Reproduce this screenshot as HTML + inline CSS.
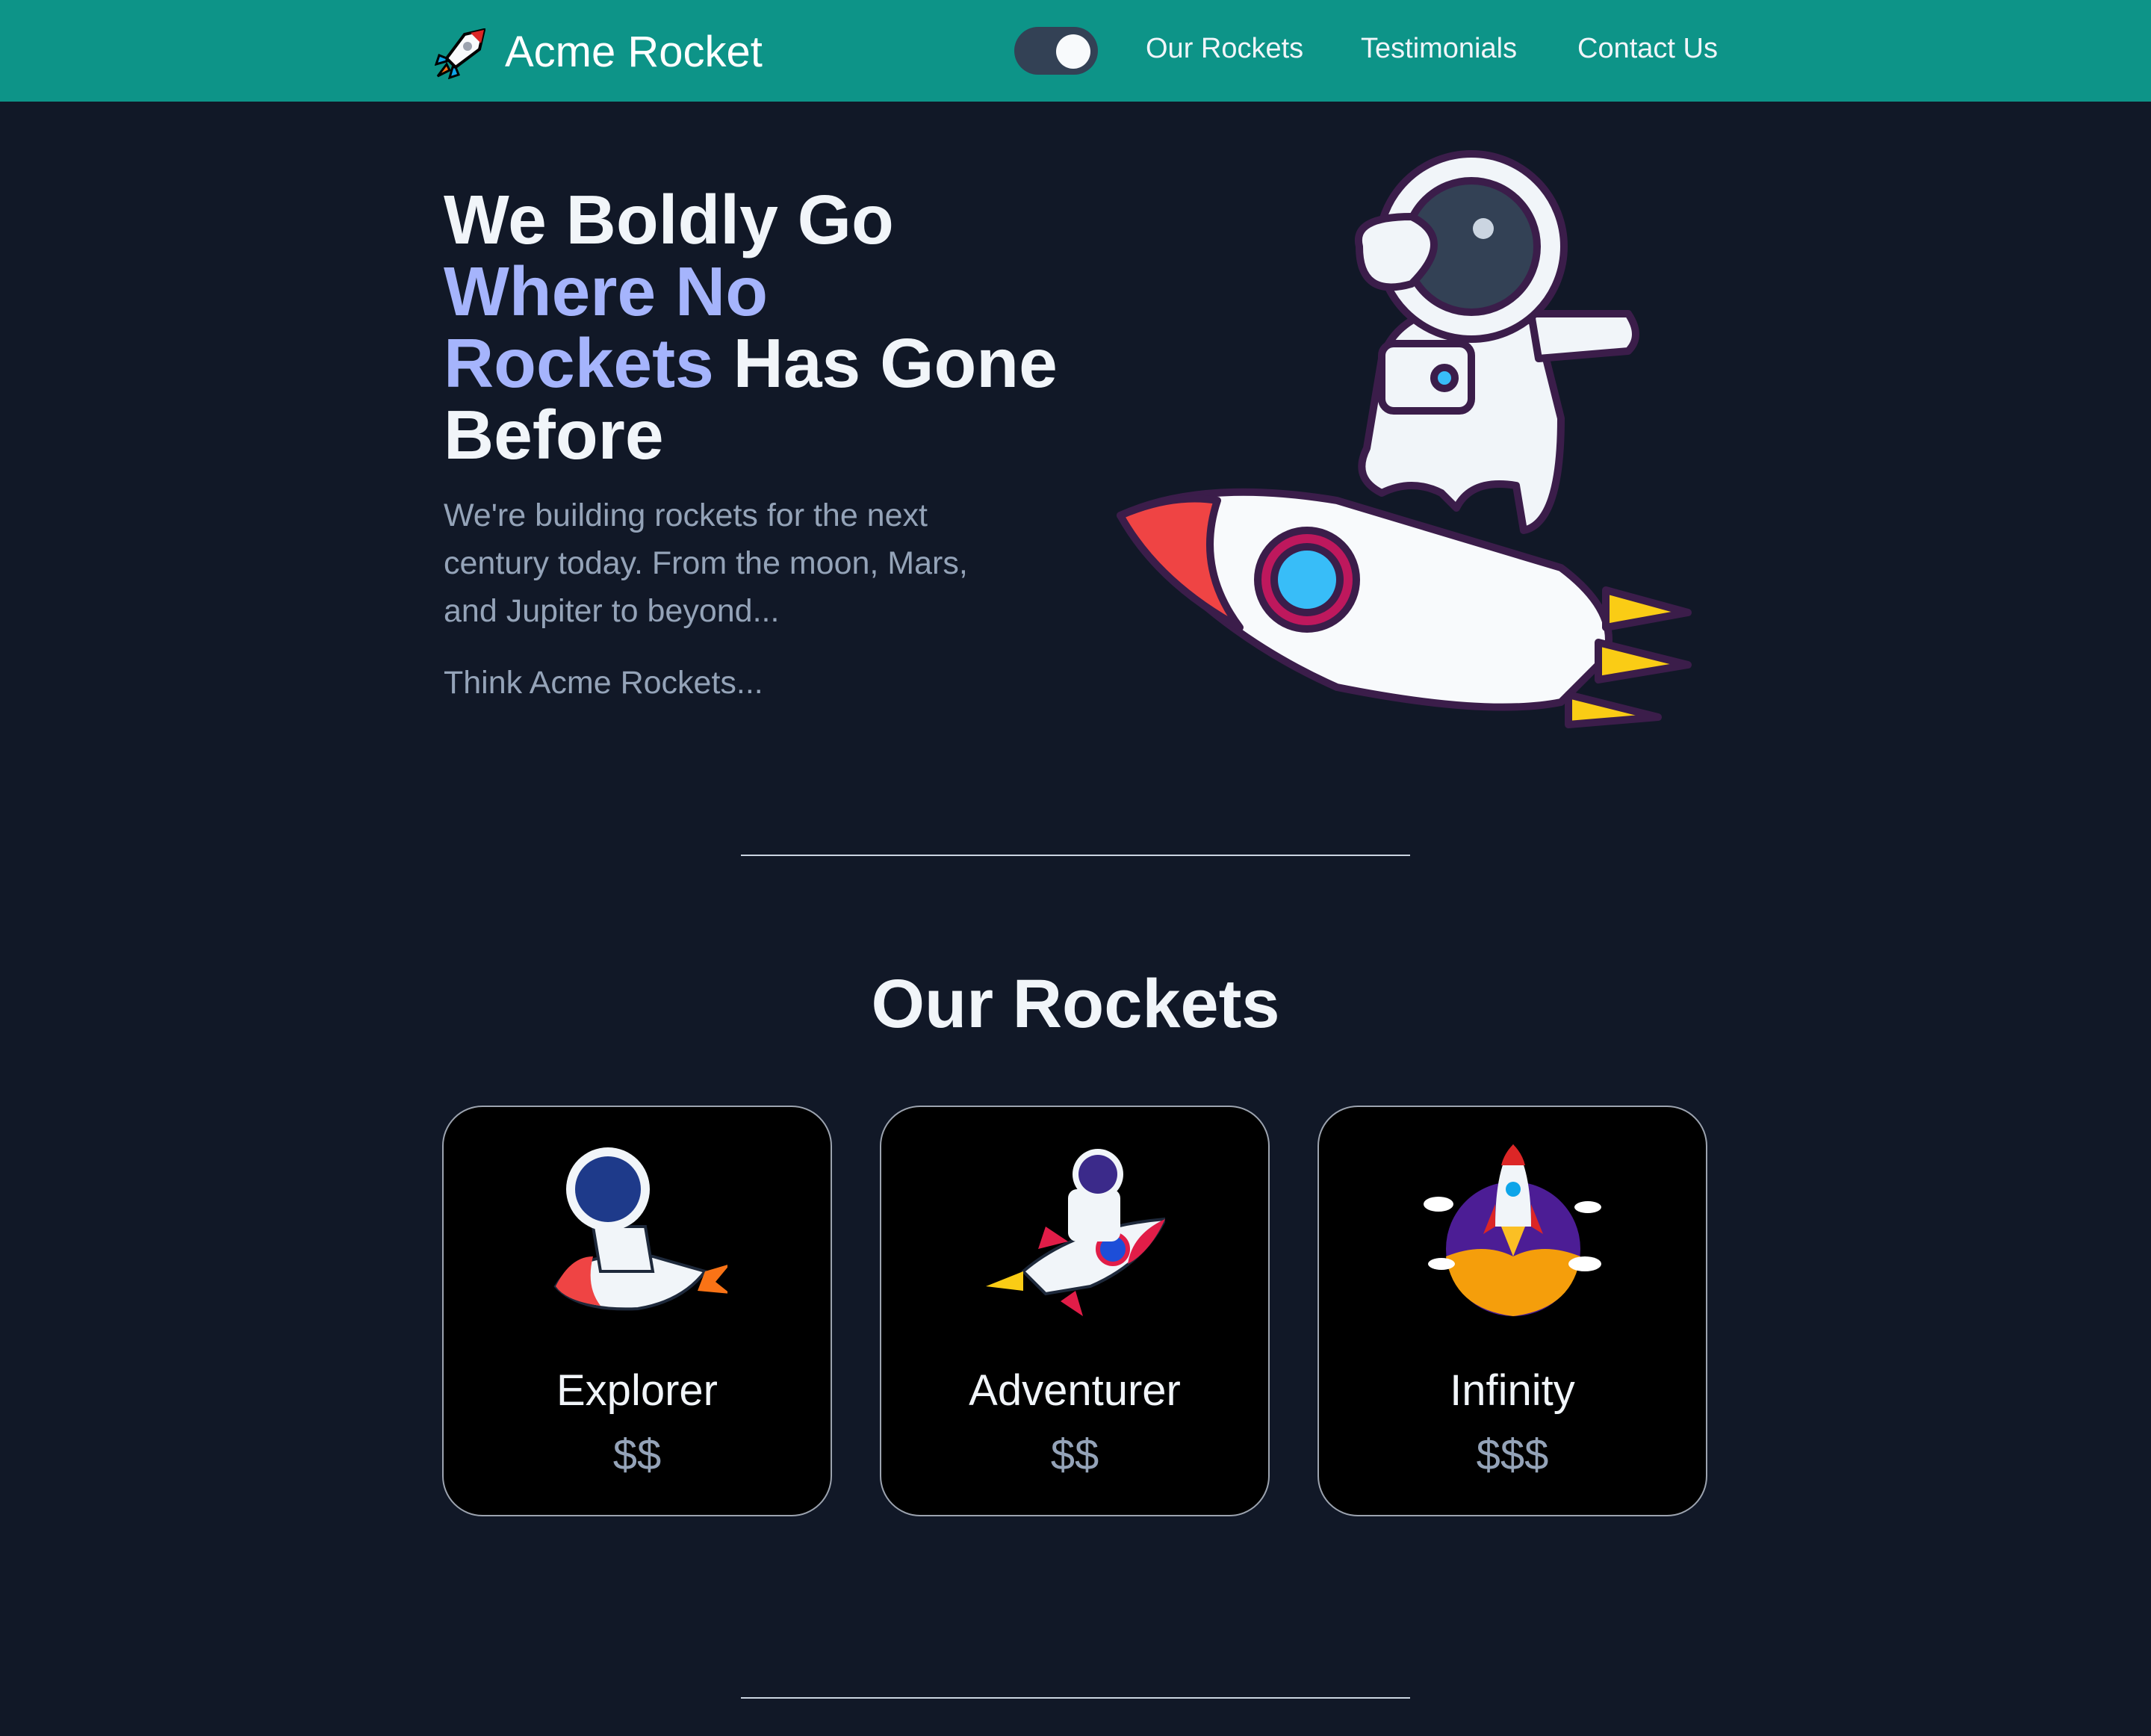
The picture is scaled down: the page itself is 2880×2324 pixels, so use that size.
<!DOCTYPE html>
<html><head><meta charset="utf-8"><style>
html,body{margin:0;padding:0;}
body{width:2880px;height:2324px;overflow:hidden;background:#111827;font-family:"Liberation Sans",sans-serif;}
#w{zoom:2;width:1440px;height:1162px;position:relative;}
.a{position:absolute;}
header{position:absolute;left:0;top:0;width:1440px;height:68px;background:#0d9488;}
.nav{color:#f1f5f9;font-size:19px;top:22px;}
h1{margin:0;position:absolute;left:297px;top:123px;font-size:46.5px;line-height:48px;color:#f1f5f9;font-weight:bold;}
h1 span{color:#a5b4fc;}
.p{color:#94a3b8;font-size:21.5px;line-height:32px;left:297px;}
.hr{height:1px;background:#cbd5e1;left:496px;width:448px;}
.card{position:absolute;top:740px;width:259px;height:273px;background:#000;border:1px solid #9ca3af;border-radius:27px;text-align:center;}
.card .n{position:absolute;left:0;right:0;top:173px;color:#f1f5f9;font-size:29px;}
.card .pr{position:absolute;left:0;right:0;top:216px;color:#94a3b8;font-size:29px;}
.card svg{position:absolute;left:70px;top:25px;}
</style></head><body><div id="w">
<header>
<svg class="a" style="left:291px;top:19px" width="34" height="34" viewBox="0 0 34 34">
<path d="M33 1 L20 4 L8 20 L14 26 L30 14 Z" fill="#f8fafc" stroke="#000" stroke-width="2"/>
<path d="M33 1 L24 3 L31 10 Z" fill="#dc2626"/>
<circle cx="22" cy="12" r="3" fill="#9ca3af"/>
<path d="M8 20 L3 18 L1 24 L8 22 Z M14 26 L16 31 L10 33 L12 26 Z" fill="#0ea5e9" stroke="#000" stroke-width="1.5"/>
<path d="M8 24 L2 32 L10 28 Z" fill="#f97316" stroke="#000" stroke-width="1.5"/>
</svg>
<div class="a" style="left:338px;top:18px;color:#fff;font-size:29px;">Acme Rocket</div>
<div class="a" style="left:679px;top:18px;width:56px;height:32px;border-radius:16px;background:#334155;"><div class="a" style="left:28px;top:5px;width:23px;height:23px;border-radius:50%;background:#f8fafc"></div></div>
<div class="a nav" style="left:767px">Our Rockets</div>
<div class="a nav" style="left:911px">Testimonials</div>
<div class="a nav" style="left:1056px">Contact Us</div>
</header>
<h1>We Boldly Go<br><span>Where No<br>Rockets</span> Has Gone<br>Before</h1>
<div class="a p" style="top:329px;width:385px">We're building rockets for the next century today. From the moon, Mars, and Jupiter to beyond...</div>
<div class="a p" style="top:441px">Think Acme Rockets...</div>
<svg class="a" style="left:745px;top:90px" width="392" height="410" viewBox="0 0 392 410">
<g stroke="#3b1d4a" stroke-width="5" stroke-linejoin="round">
<path d="M5 255 Q60 230 150 245 L300 290 Q340 320 330 350 L300 380 Q250 390 150 370 Q60 330 5 255 Z" fill="#f8fafc"/>
<path d="M5 255 Q40 240 70 245 Q55 290 85 330 Q30 300 5 255 Z" fill="#ef4444"/>
<circle cx="130" cy="298" r="33" fill="#be185d"/><circle cx="130" cy="298" r="22" fill="#38bdf8"/>
<path d="M330 305 L385 320 L330 330 Z M325 340 L385 355 L325 365 Z M305 375 L365 390 L305 395 Z" fill="#facc15"/>
<path d="M180 150 Q190 120 230 115 Q290 110 290 150 L300 190 Q300 260 275 265 L270 235 Q240 230 230 250 L220 240 Q200 230 180 240 Q160 230 170 210 Z" fill="#f1f5f9"/>
<path d="M280 120 L345 120 Q355 135 345 145 L285 150 Z" fill="#f1f5f9"/>
<circle cx="240" cy="75" r="62" fill="#f1f5f9"/>
<circle cx="240" cy="75" r="44" fill="#334155"/>
<path d="M165 75 Q160 55 200 55 Q230 70 200 100 Q165 110 165 75 Z" fill="#f1f5f9"/>
<rect x="180" y="140" width="60" height="45" rx="8" fill="#f1f5f9"/>
<circle cx="222" cy="163" r="7" fill="#38bdf8"/>
</g>
<circle cx="248" cy="63" r="7" fill="#cbd5e1"/>
</svg>
<div class="a hr" style="top:572px"></div>
<div class="a" style="left:0;width:1440px;top:646px;text-align:center;color:#f1f5f9;font-size:46px;font-weight:bold;">Our Rockets</div>
<div class="card" style="left:296px">
<svg width="120" height="115" viewBox="0 0 120 115">
<path d="M5 95 Q20 70 70 75 L105 85 Q90 105 60 110 Q20 112 5 95 Z" fill="#f1f5f9" stroke="#1e293b" stroke-width="2"/>
<path d="M5 95 Q15 75 30 75 Q25 95 35 108 Q12 105 5 95 Z" fill="#ef4444"/>
<path d="M105 85 L122 80 L112 92 L122 100 L100 98 Z" fill="#f97316"/>
<path d="M30 55 L65 55 L70 85 L35 85 Z" fill="#f1f5f9" stroke="#1e293b" stroke-width="2"/>
<circle cx="40" cy="30" r="28" fill="#f1f5f9"/><circle cx="40" cy="30" r="22" fill="#1e3a8a"/>
</svg>
<div class="n">Explorer</div><div class="pr">$$</div></div>
<div class="card" style="left:589px">
<svg width="120" height="115" viewBox="0 0 120 115">
<path d="M25 85 Q60 55 120 50 Q105 80 70 95 L40 100 Z" fill="#f1f5f9" stroke="#1e293b" stroke-width="2"/>
<path d="M120 50 Q110 72 95 80 Q98 60 120 50 Z M60 98 L65 115 L50 105 Z M40 55 L55 65 L35 70 Z" fill="#e11d48"/>
<path d="M25 85 L0 95 L25 98 Z" fill="#facc15"/>
<circle cx="85" cy="70" r="10" fill="#1d4ed8" stroke="#e11d48" stroke-width="3"/>
<rect x="55" y="30" width="35" height="35" rx="6" fill="#f1f5f9"/>
<circle cx="75" cy="20" r="17" fill="#f1f5f9"/><circle cx="75" cy="20" r="13" fill="#3b2a8a"/>
</svg>
<div class="n">Adventurer</div><div class="pr">$$</div></div>
<div class="card" style="left:882px">
<svg width="120" height="115" viewBox="0 0 120 115">
<circle cx="60" cy="70" r="45" fill="#4c1d95"/>
<path d="M15 75 Q40 65 60 75 Q80 65 105 75 Q100 110 60 115 Q20 110 15 75 Z" fill="#f59e0b"/>
<path d="M60 0 Q72 15 72 55 L48 55 Q48 15 60 0 Z" fill="#f1f5f9"/>
<path d="M60 0 Q66 6 68 14 L52 14 Q54 6 60 0 Z M48 40 L40 60 L48 55 Z M72 40 L80 60 L72 55Z" fill="#dc2626"/>
<path d="M52 55 L60 75 L68 55 Z" fill="#fbbf24"/>
<circle cx="60" cy="30" r="5" fill="#0ea5e9"/>
<ellipse cx="10" cy="40" rx="10" ry="5" fill="#fff"/><ellipse cx="110" cy="42" rx="9" ry="4" fill="#fff"/>
<ellipse cx="12" cy="80" rx="9" ry="4" fill="#fff"/><ellipse cx="108" cy="80" rx="11" ry="5" fill="#fff"/>
</svg>
<div class="n">Infinity</div><div class="pr">$$$</div></div>
<div class="a hr" style="top:1136px"></div>
</div></body></html>
